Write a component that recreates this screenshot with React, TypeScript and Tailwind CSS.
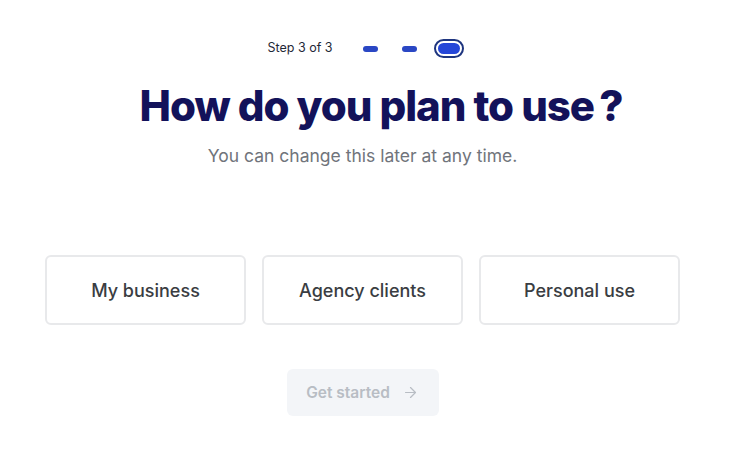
import { ArrowRight } from "lucide-react"

export default function App() {
  const options = ["My business", "Agency clients", "Personal use"]

  return (
    <div
      className="min-h-screen w-full bg-white flex flex-col items-center pr-[25px] pt-[39px]"
      style={{ fontFamily: "Inter, 'Noto Sans', sans-serif" }}
    >
      {/* Step indicator */}
      <div className="flex items-center h-[19px] ml-[6px]">
        <span className="text-[12.5px] text-[#1f2937] mr-[30px]">Step 3 of 3</span>
        <div className="w-[15px] h-[6px] rounded-full bg-[#2a47c4]"></div>
        <div className="w-[15px] h-[6px] rounded-full bg-[#2a47c4] ml-[24px]"></div>
        <div className="ml-[17px] w-[30px] h-[19px] rounded-full border-2 border-[#1e357f] p-[2px]">
          <div className="w-full h-full rounded-full bg-[#2546d8]"></div>
        </div>
      </div>

      <h1 className="mt-[27px] ml-[37px] text-[42px] leading-[42px] font-extrabold tracking-tight text-[#13125a]">
        How do you plan to use{"\u2009"}?
      </h1>
      <p className="mt-[17px] text-[17.5px] leading-[24px] text-[#70747b]">
        You can change this later at any time.
      </p>

      {/* Options */}
      <div className="mt-[87px] grid grid-cols-3 gap-4 w-[635px]">
        {options.map((option) => (
          <button
            key={option}
            className="h-[70px] rounded-md border-2 border-[#e8e9eb] bg-white flex items-center justify-center text-[18px] font-medium text-[#3a3d42]"
          >
            {option}
          </button>
        ))}
      </div>

      <button className="mt-[44px] w-[152px] h-[47px] rounded-md bg-[#f3f5f8] flex items-center justify-center gap-3 text-[15.5px] font-semibold text-[#b8bdc4]">
        Get started
        <ArrowRight className="w-[17px] h-[17px]" strokeWidth={1.75} />
      </button>
    </div>
  )
}
